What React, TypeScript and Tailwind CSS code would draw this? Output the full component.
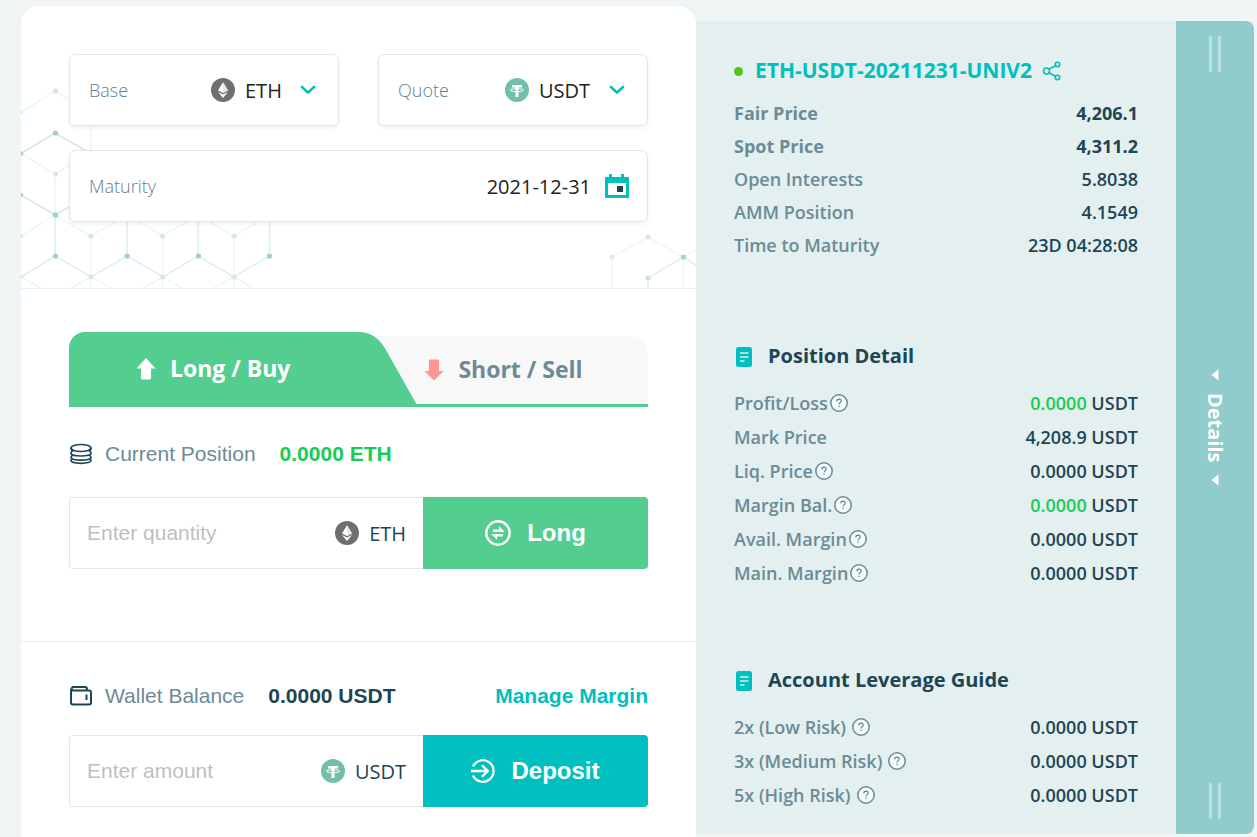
import React from "react";

const sans = "font-['Open_Sans','Noto_Sans',sans-serif]";

function EthIcon() {
  return (
    <svg width="24" height="24" viewBox="0 0 24 24" className="shrink-0" aria-hidden="true">
      <circle cx="12" cy="12" r="12" fill="#6f6f6f" />
      <path d="M12 4.200 7 12.600l5 2.500 5-2.500z" fill="#fff" />
      <path d="M12 4.200v10.900l5-2.500z" fill="#e6e6e6" />
      <path d="m7 14 5 6 5-6-5 2.600z" fill="#fff" />
    </svg>
  );
}

function UsdtIcon() {
  return (
    <svg width="24" height="24" viewBox="0 0 24 24" className="shrink-0" aria-hidden="true">
      <circle cx="12" cy="12" r="12" fill="#74bfaa" />
      <path d="M7 7h10v2.600h-3.500V19h-3V9.600H7z" fill="#fff" />
      <ellipse cx="12" cy="12.200" rx="6.600" ry="1.500" fill="none" stroke="#fff" strokeWidth="1" />
    </svg>
  );
}

function Chevron() {
  return (
    <svg width="16" height="10" viewBox="0 0 16 10" className="pointer-events-none shrink-0" aria-hidden="true">
      <path d="m2 2 6 5.600L14 2" fill="none" stroke="#00bfbf" strokeWidth="2.600" strokeLinecap="round" strokeLinejoin="round" />
    </svg>
  );
}

function Help() {
  return (
    <svg width="18" height="18" viewBox="0 0 18 18" className="shrink-0" role="img" aria-label="Help">
      <circle cx="9" cy="9" r="8.200" fill="#f6fafa" stroke="#6b8b97" strokeWidth="1.500" />
      <path d="M6.800 7.200c0-1.400 1-2.100 2.200-2.100s2.200.8 2.200 2c0 1.500-2.100 1.600-2.100 3.300" fill="none" stroke="#5b7d8a" strokeWidth="1.100" />
      <path d="M8.500 11.800h1.200V13H8.500z" fill="#5b7d8a" />
    </svg>
  );
}

function DocIcon() {
  return (
    <svg width="16" height="20" viewBox="0 0 16 20" className="mt-0.5 shrink-0" aria-hidden="true">
      <rect width="16" height="20" rx="2.500" fill="#00bfbf" />
      <path d="M4 6h8.500M4 10h8.500M4 14h4.500" stroke="#d4f2f1" strokeWidth="1.500" />
    </svg>
  );
}

function Lattice() {
  return (
    <>
      <svg width="252" height="208" viewBox="0 0 252 208" className="absolute bottom-0 left-0" aria-hidden="true">
        <g fill="none" strokeWidth="1.500">
          <path
            stroke="#edf6f6"
            d="M0 32 34 11 70 32V73M0 73.500 34 94 70 73.500M34 94v41M0 156 34 135 70 156 106 135 142 156 177 135 213 156 248 135M70 156v52M142 156v52M213 156v52M0 197 20 208M50 208 70 197 90 208M122 208 142 197 161 208M193 208 213 197 232 208"
          />
          <path stroke="#dceeed" d="M34 135v41M106 135v41M177 135v41M248.500 135v41M0 197 34 176 70 197 106 176 142 197 177 176 213 197 248.500 176" />
          <path stroke="#d0e7e6" d="M0 73.500 34 53 70 73.500M0 115 34 135 70 115" />
        </g>
        <g fill="#d3e8e7">
          <circle cx="34.500" cy="11" r="2.600" />
          <circle cx="0" cy="32" r="2" />
          <circle cx="34.500" cy="94" r="2.600" />
          <circle cx="0" cy="156" r="2" />
          <circle cx="70" cy="156" r="2.600" />
          <circle cx="141.500" cy="156" r="2.600" />
          <circle cx="213" cy="156" r="2.600" />
          <circle cx="0" cy="197" r="2" />
          <circle cx="70" cy="197" r="2.600" />
          <circle cx="141.500" cy="197" r="2.600" />
          <circle cx="213" cy="197" r="2.600" />
        </g>
        <g fill="#a3cfcd">
          <circle cx="34.500" cy="53" r="2.600" />
          <circle cx="0" cy="73.500" r="2.200" />
          <circle cx="0" cy="115" r="2.200" />
          <circle cx="34.500" cy="135" r="2.800" />
          <circle cx="34.500" cy="176" r="2.600" />
          <circle cx="106" cy="176" r="2.600" />
          <circle cx="177.500" cy="176" r="2.600" />
          <circle cx="248.500" cy="176" r="2.600" />
        </g>
      </svg>
      <svg width="96" height="58" viewBox="0 0 96 58" className="absolute right-0 bottom-0" aria-hidden="true">
        <g fill="none" strokeWidth="1.500">
          <path stroke="#edf6f6" d="M12 58V27L48 7 83.500 27V58M83.500 27 96 20" />
          <path stroke="#dfefee" d="M48 58V48L83.500 27 96 35" />
        </g>
        <circle cx="12" cy="27" r="2.500" fill="#d9ebea" />
        <circle cx="48" cy="7" r="2.500" fill="#d3e8e7" />
        <circle cx="48" cy="48" r="2.500" fill="#c9e3e2" />
        <circle cx="83.500" cy="27" r="2.600" fill="#a3cfcd" />
      </svg>
    </>
  );
}

const box = "relative flex h-[72px] items-center rounded-md border border-[#e4e6e8] bg-white shadow-[0_2px_4px_rgba(0,0,0,0.06)]";

function CoinSelect({ id, label, coin, icon }: { id: string; label: string; coin: string; icon: React.ReactNode }) {
  return (
    <div className={box + " justify-between pr-[22px] pl-[19px]"}>
      <label htmlFor={id} className="text-[18px] font-light text-[#5f818e]">
        {label}
      </label>
      <div className="flex items-center">
        {icon}
        <select id={id} className="-mr-[34px] ml-2.5 appearance-none bg-transparent pt-0.5 pr-[52px] text-[20px] leading-7 text-[#222] outline-none">
          <option>{coin}</option>
        </select>
        <Chevron />
      </div>
    </div>
  );
}

function AmountField({
  id,
  label,
  coin,
  icon,
  action,
  actionIcon,
  tone,
}: {
  id: string;
  label: string;
  coin: string;
  icon: React.ReactNode;
  action: string;
  actionIcon: React.ReactNode;
  tone: string;
}) {
  return (
    <div className="flex h-[72px]">
      <div className="flex min-w-0 flex-1 items-center rounded-l border border-r-0 border-[#e4e6e8] pr-[17px] pl-[17px]">
        <input
          id={id}
          aria-label={label}
          placeholder={label}
          className="min-w-0 flex-1 bg-transparent text-[21px] outline-none placeholder:text-[#bfbfbf]"
        />
        {icon}
        <span className={sans + " ml-2.5 pt-0.5 text-[20px] text-[#1c4556]"}>{coin}</span>
      </div>
      <button className={"flex w-[225px] items-center justify-center gap-4 rounded-r text-[24px] font-bold text-white " + tone}>
        {actionIcon}
        {action}
      </button>
    </div>
  );
}

function Row({ label, help, amount, unit, bold, green }: { label: string; help?: string; amount: string; unit?: string; bold?: boolean; green?: boolean }) {
  return (
    <div className={"flex items-center justify-between " + (bold ? "font-bold" : "font-semibold")}>
      <dt className="flex items-center text-[#6b8b97]">
        {label}
        {help && <span className={help}><Help /></span>}
      </dt>
      <dd className="text-[#1c4556]">
        <span className={green ? "text-[#16cc55]" : ""}>{amount}</span>
        {unit && " " + unit}
      </dd>
    </div>
  );
}

function Bars() {
  return (
    <span className="flex h-9 gap-1.5">
      <span className="w-[3px] bg-[#bce0e0]" />
      <span className="w-[3px] bg-[#bce0e0]" />
    </span>
  );
}

function Triangle() {
  return (
    <svg width="8" height="12" viewBox="0 0 8 12" aria-hidden="true">
      <path d="M7.500.5v11L.5 6z" fill="#fff" />
    </svg>
  );
}

export default function App() {
  return (
    <main className="grid min-h-screen grid-cols-[minmax(0,675fr)_minmax(0,480fr)_78px] bg-[#eff5f5] pt-1.5 pr-[3px] pl-[21px] font-['Liberation_Sans',Arial,sans-serif]">
      <section className="relative rounded-t-[18px] bg-white">
        <div className={sans + " relative border-b border-[#ebeeef] px-12 pt-12 pb-[66px]"}>
          <Lattice />
          <div className="grid grid-cols-2 gap-x-[39px] gap-y-6">
            <CoinSelect id="base" label="Base" coin="ETH" icon={<EthIcon />} />
            <CoinSelect id="quote" label="Quote" coin="USDT" icon={<UsdtIcon />} />
            <div className={box + " col-span-2 pr-[18px] pl-[19px]"}>
              <label htmlFor="maturity" className="text-[18px] font-light text-[#5f818e]">
                Maturity
              </label>
              <input
                id="maturity"
                defaultValue="2021-12-31"
                className="mr-3.5 min-w-0 flex-1 bg-transparent pt-0.5 text-right text-[20px] text-[#222] outline-none"
              />
              <svg width="24" height="24" viewBox="0 0 24 24" aria-hidden="true">
                <path d="M4 0h3v3h9V0h3v3h4a1 1 0 0 1 1 1v19a1 1 0 0 1-1 1H1a1 1 0 0 1-1-1V4a1 1 0 0 1 1-1h3zM3 9v12h18V9z" fill="#00bfbf" fillRule="evenodd" />
                <path d="M12 12h6v6h-6z" fill="#1c4556" />
              </svg>
            </div>
          </div>
        </div>

        <div className="border-b border-[#ebeeef] px-12 pt-[43px] pb-[72px]">
          <div role="tablist" className={sans + " relative flex h-[75px] text-[23px] font-bold"}>
            <div className="absolute inset-x-0 top-1 bottom-0 rounded-t-[18px] border-b-3 border-[#53ce90] bg-[#f8f8f8]" />
            <button role="tab" aria-selected="true" className="relative flex w-3/5 items-center pb-0.5 pl-[67px] text-white">
              <svg viewBox="0 0 348 75" preserveAspectRatio="none" className="absolute inset-0 size-full" aria-hidden="true">
                <path d="M0 75V16A16 16 0 0 1 16 0H290C303 0 311 7 317 17L348 72V75Z" fill="#53ce90" />
              </svg>
              <svg width="20" height="22" viewBox="0 0 20 22" className="relative" aria-hidden="true">
                <path d="M10 0 19.500 10.500H15V20.500a1 1 0 0 1-1 1H6a1 1 0 0 1-1-1V10.500H.5z" fill="#fff" />
              </svg>
              <span className="relative ml-3.5">Long / Buy</span>
            </button>
            <button role="tab" aria-selected="false" className="relative flex flex-1 items-center pl-2 text-[#6b8b97]">
              <svg width="20" height="22" viewBox="0 0 20 22" aria-hidden="true">
                <path d="M10 21.500.5 12H5V1.500a1 1 0 0 1 1-1h8a1 1 0 0 1 1 1V12h4.500z" fill="#ff9494" />
              </svg>
              <span className="ml-3.5">Short / Sell</span>
            </button>
          </div>

          <div className="mt-[31px] mb-[27px] flex h-8 items-center text-[21px]">
            <svg width="24" height="22" viewBox="0 0 24 22" fill="none" stroke="#1c4556" strokeWidth="1.700" aria-hidden="true">
              <ellipse cx="12" cy="5" rx="10" ry="3.500" />
              <path d="M2 5c0 1.800.8 2.800 2 3.600M22 5c0 1.800-.8 2.800-2 3.600" />
              <path d="M3.500 8C2.500 8.500 2 9 2 10c0 1.900 4.500 3 10 3s10-1.100 10-3c0-1-.5-1.500-1.500-2M4 12.200c-1.200.5-2 1.200-2 2 0 1.900 4.500 2.900 10 2.900s10-1 10-2.900c0-.8-.8-1.500-2-2" />
              <path d="M4 15.800c-1.200.3-2 .7-2 1.500 0 1.900 4.500 3 10 3s10-1.100 10-3c0-.8-.8-1.200-2-1.500" />
            </svg>
            <span className="ml-3 text-[#6b8b97]">Current Position</span>
            <span className="ml-6 font-bold text-[#16cc55]">0.0000 ETH</span>
          </div>

          <AmountField
            id="quantity"
            label="Enter quantity"
            coin="ETH"
            icon={<EthIcon />}
            action="Long"
            tone="bg-[#53ce90]"
            actionIcon={
              <svg width="26" height="26" viewBox="0 0 26 26" aria-hidden="true">
                <circle cx="13" cy="13" r="11.700" fill="none" stroke="#fff" strokeWidth="2.400" />
                <path d="M8 9.500h6V6.200l5.500 5.300v.5H8zM18 16.500h-6v3.300L6.500 14.500V14H18z" fill="#fff" />
              </svg>
            }
          />
        </div>

        <div className="px-12 pt-[38px] pb-[30px]">
          <div className="mb-[23px] flex h-8 items-center text-[21px]">
            <svg width="24" height="22" viewBox="0 0 24 22" fill="none" stroke="#1c4556" strokeWidth="2" strokeLinejoin="round" aria-hidden="true">
              <path d="M2 4v13.500a2 2 0 0 0 2 2h16a2 2 0 0 0 2-2v-10a2 2 0 0 0-2-2H4A1.800 1.800 0 0 1 4 2h12a2 2 0 0 1 2 2v1.500" />
              <path d="M17.500 9.500v5.500" />
            </svg>
            <span className="ml-3 text-[#6b8b97]">Wallet Balance</span>
            <span className="ml-6 font-bold text-[#1c4556]">0.0000 USDT</span>
            <a href="#margin" className="ml-auto font-bold text-[#00bfbf]">
              Manage Margin
            </a>
          </div>

          <AmountField
            id="amount"
            label="Enter amount"
            coin="USDT"
            icon={<UsdtIcon />}
            action="Deposit"
            tone="bg-[#00bfc1]"
            actionIcon={
              <svg width="24" height="24" viewBox="0 0 24 24" fill="none" stroke="#fff" strokeWidth="2.300" aria-hidden="true">
                <path d="M2 7.500A10.800 10.800 0 1 1 2 16.500M0 12h16.500M11 6.200l5.800 5.800-5.800 5.800" />
              </svg>
            }
          />
        </div>
      </section>

      <section className={sans + " mt-[15px] mb-[3px] bg-[#e4efef] px-[38px] pt-9 text-[18px]"}>
        <div className="flex h-7 items-center text-[21px] font-bold text-[#00bfbf]">
          <span className="mr-3 size-[9px] rounded-full bg-[#52c41a]" />
          <h2>ETH-USDT-20211231-UNIV2</h2>
          <button aria-label="Share" className="ml-2.5">
            <svg width="20" height="20" viewBox="0 0 20 20" fill="none" stroke="#00bfbf" strokeWidth="1.600" aria-hidden="true">
              <circle cx="4.500" cy="10" r="3" />
              <circle cx="15.500" cy="3.500" r="2.200" />
              <circle cx="15.500" cy="16.500" r="2.200" />
              <path d="m7 8.300 6.500-3.600M7 11.700l6.500 3.600" />
            </svg>
          </button>
        </div>
        <dl className="mt-3 grid auto-rows-[33px]">
          <Row label="Fair Price" amount="4,206.1" bold />
          <Row label="Spot Price" amount="4,311.2" bold />
          <Row label="Open Interests" amount="5.8038" />
          <Row label="AMM Position" amount="4.1549" />
          <Row label="Time to Maturity" amount="23D 04:28:08" />
        </dl>

        <h3 className="mt-20 flex h-7 items-center gap-4 pl-0.5 text-[20px] font-bold text-[#1c4556]">
          <DocIcon />
          Position Detail
        </h3>
        <dl className="mt-4 grid auto-rows-[34px]">
          <Row label="Profit/Loss" help="ml-0.5" amount="0.0000" unit="USDT" green />
          <Row label="Mark Price" amount="4,208.9" unit="USDT" />
          <Row label="Liq. Price" help="ml-0.5" amount="0.0000" unit="USDT" />
          <Row label="Margin Bal." help="ml-0.5" amount="0.0000" unit="USDT" green />
          <Row label="Avail. Margin" help="ml-0.5" amount="0.0000" unit="USDT" />
          <Row label="Main. Margin" help="ml-0.5" amount="0.0000" unit="USDT" />
        </dl>

        <h3 className="mt-[76px] flex h-7 items-center gap-4 pl-0.5 text-[20px] font-bold text-[#1c4556]">
          <DocIcon />
          Account Leverage Guide
        </h3>
        <dl className="mt-4 grid auto-rows-[34px]">
          <Row label="2x (Low Risk)" help="ml-1.5" amount="0.0000" unit="USDT" />
          <Row label="3x (Medium Risk)" help="ml-1.5" amount="0.0000" unit="USDT" />
          <Row label="5x (High Risk)" help="ml-1.5" amount="0.0000" unit="USDT" />
        </dl>
      </section>

      <button className={sans + " mt-[15px] mb-[3px] flex flex-col items-center justify-between rounded-r-lg bg-[#90cccb] py-[15px] text-[20px] font-bold text-white"}>
        <Bars />
        <span className="flex flex-col items-center gap-3">
          <Triangle />
          <span className="leading-6 [writing-mode:vertical-rl]">Details</span>
          <Triangle />
        </span>
        <Bars />
      </button>
    </main>
  );
}
